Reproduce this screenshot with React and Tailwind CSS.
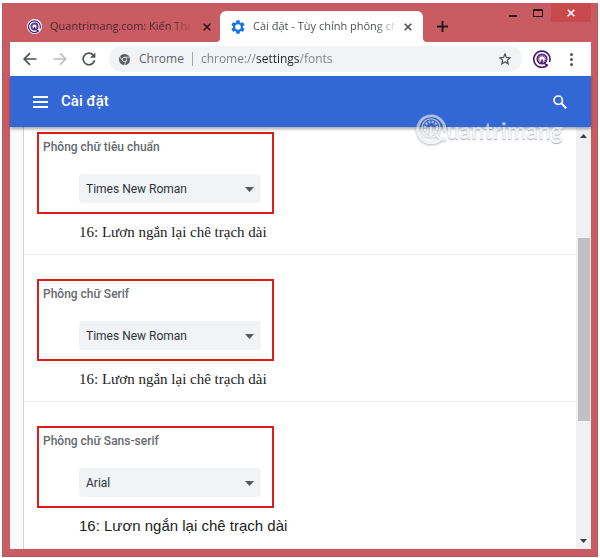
import { useState } from 'react';

const fontSections = [
  { id: 'standard', label: 'Phông chữ tiêu chuẩn', value: 'Times New Roman' },
  { id: 'serif', label: 'Phông chữ Serif', value: 'Times New Roman' },
  { id: 'sans', label: 'Phông chữ Sans-serif', value: 'Arial' },
];

const sampleText = '16: Lươn ngắn lại chê trạch dài';

function SiteLogo({ className }) {
  return (
    <svg className={className} viewBox="0 0 24 24" fill="none" stroke="currentColor">
      <path d="M19.2 20.2 A10.8 10.8 0 1 1 22 16" strokeWidth="2.2" />
      <path d="M15.4 17.6 q1.6 3 4.6 2.4" strokeWidth="2" />
      <circle cx="12" cy="12" r="5.6" strokeWidth="3.6" />
      <circle cx="12" cy="12" r="5" stroke="white" strokeOpacity="0.75" strokeWidth="1.4" strokeDasharray="1.4 1.2" />
      <path d="M10.9 12.5 h2.2 v5.5 h-2.2 Z" fill="currentColor" stroke="none" />
    </svg>
  );
}

function WatermarkLogo({ className }) {
  return (
    <svg className={className} viewBox="0 0 32 32" fill="none" stroke="currentColor">
      <path d="M26 26.5 A14 14 0 1 1 29.6 19" strokeWidth="3" />
      <circle cx="15.5" cy="15.5" r="9.4" strokeWidth="1.4" />
      <circle cx="15.5" cy="15.5" r="6.4" strokeWidth="2.6" strokeDasharray="2 1.35" />
      <path d="M15.5 14 V24 M21.5 22.5 q3.5 6 9 4.5" strokeWidth="2.4" />
    </svg>
  );
}

function CloseIcon({ className }) {
  return (
    <svg className={className} viewBox="0 0 8 8" fill="none" stroke="currentColor" strokeWidth="1.6">
      <path d="M0.7 0.7 L7.3 7.3 M7.3 0.7 L0.7 7.3" />
    </svg>
  );
}

function GearIcon() {
  return (
    <svg className="size-[14px] shrink-0 text-[#1a73e8]" viewBox="1.5 1.5 21 21" fill="currentColor">
      <path d="M19.43 12.98c.04-.32.07-.64.07-.98s-.03-.66-.07-.98l2.11-1.65c.19-.15.24-.42.12-.64l-2-3.46c-.12-.22-.39-.3-.61-.22l-2.49 1c-.52-.4-1.08-.73-1.69-.98l-.38-2.65A.49.49 0 0 0 14 2h-4c-.25 0-.46.18-.49.42l-.38 2.65c-.61.25-1.17.59-1.69.98l-2.49-1c-.23-.09-.49 0-.61.22l-2 3.46c-.13.22-.07.49.12.64l2.11 1.65c-.04.32-.07.65-.07.98s.03.66.07.98l-2.11 1.65c-.19.15-.24.42-.12.64l2 3.46c.12.22.39.3.61.22l2.49-1c.52.4 1.08.73 1.69.98l.38 2.65c.03.24.24.42.49.42h4c.25 0 .46-.18.49-.42l.38-2.65c.61-.25 1.17-.59 1.69-.98l2.49 1c.23.09.49 0 .61-.22l2-3.46c.12-.22.07-.49-.12-.64l-2.11-1.65zM12 16.2a4.2 4.2 0 1 1 0-8.4 4.2 4.2 0 0 1 0 8.4z" />
    </svg>
  );
}

function TitleBar() {
  return (
    <div className="flex h-[39px] items-start">
      <div className="mt-2 flex h-[31px] w-[210px] shrink-0 items-center pl-[17px] pr-1">
        <span className="mr-2 rounded-full bg-white p-px text-[#4b1a78]">
          <SiteLogo className="size-[13px]" />
        </span>
        <span className="w-[141px] overflow-hidden whitespace-nowrap bg-[linear-gradient(to_right,#45282b_120px,transparent_143px)] bg-clip-text text-[11px] text-transparent">
          Quantrimang.com: Kiến Thức
        </span>
        <button aria-label="Đóng thẻ" className="ml-3 text-[#2b1717]">
          <CloseIcon className="size-2" />
        </button>
      </div>

      <div className="relative mt-2 flex h-[31px] w-[203px] shrink-0 items-center rounded-t-md bg-white pl-[11px]">
        <svg className="absolute bottom-0 -left-1 size-1 text-white" viewBox="0 0 4 4" fill="currentColor">
          <path d="M4 0 V4 H0 A4 4 0 0 0 4 0 Z" />
        </svg>
        <svg className="absolute bottom-0 -right-1 size-1 text-white" viewBox="0 0 4 4" fill="currentColor">
          <path d="M0 0 V4 H4 A4 4 0 0 1 0 0 Z" />
        </svg>
        <GearIcon />
        <span className="ml-2 w-[143px] overflow-hidden whitespace-nowrap bg-[linear-gradient(to_right,#45484c_122px,transparent_145px)] bg-clip-text text-[11px] text-transparent">
          Cài đặt - Tùy chỉnh phông chữ
        </span>
        <button aria-label="Đóng thẻ" className="ml-2 text-[#4a4d51]">
          <CloseIcon className="size-2" />
        </button>
      </div>

      <button aria-label="Thẻ mới" className="mt-[18px] ml-[14px] text-[#26181a]">
        <svg className="size-[11px]" viewBox="0 0 11 11" stroke="currentColor" strokeWidth="2">
          <path d="M5.5 0 V11 M0 5.5 H11" />
        </svg>
      </button>

      <div className="ml-auto flex h-[19px] items-center">
        <button aria-label="Thu nhỏ" className="flex h-full w-[22px] items-end justify-center pb-[5px]">
          <span className="h-[2px] w-2 bg-[#26181a]"></span>
        </button>
        <button aria-label="Phóng to" className="flex h-full w-[27px] items-center justify-center">
          <span className="h-2 w-[10px] border border-t-2 border-[#26181a]"></span>
        </button>
        <button aria-label="Đóng" className="flex h-full w-10 items-center justify-center bg-[#c94a4d] text-white">
          <CloseIcon className="size-2" />
        </button>
      </div>
    </div>
  );
}

function Toolbar() {
  return (
    <div className="flex h-[34px] items-center bg-white pl-[13px] text-[#4f5357]">
      <button aria-label="Quay lại">
        <svg className="size-[14px]" viewBox="0 0 14 14" fill="none" stroke="currentColor" strokeWidth="1.7">
          <path d="M13.5 7 H1.5 M7 1.2 L1.2 7 L7 12.8" />
        </svg>
      </button>
      <button aria-label="Tiến" className="ml-4 text-[#b9bbbe]">
        <svg className="size-[14px]" viewBox="0 0 14 14" fill="none" stroke="currentColor" strokeWidth="1.6">
          <path d="M0.5 7 H12.5 M7 1.2 L12.8 7 L7 12.8" />
        </svg>
      </button>
      <button aria-label="Tải lại" className="ml-[15px]">
        <svg className="size-[14px]" viewBox="0 0 14 14" fill="none" stroke="currentColor" strokeWidth="1.7">
          <path d="M12.6 8.2 A5.8 5.8 0 1 1 11.3 3.1" />
          <path d="M13.4 0.4 V5.8 H8 Z" fill="currentColor" stroke="none" />
        </svg>
      </button>

      <div className="ml-[13px] flex h-[26px] min-w-0 flex-1 items-center rounded-full bg-[#f1f3f4] pr-[11px] pl-[10px]">
        <svg className="size-[11px] shrink-0" viewBox="0 0 12 12">
          <circle cx="6" cy="6" r="6" fill="#5a5e62" />
          <circle cx="6" cy="6" r="2.4" fill="#5a5e62" stroke="#f1f3f4" strokeWidth="0.9" />
          <path d="M6 3.4 H11.4 M3.7 7.3 L1 2.8 M8.3 7.3 L5.6 12" stroke="#f1f3f4" strokeWidth="0.8" />
        </svg>
        <span className="ml-[9px] text-xs text-[#5f6368]">Chrome</span>
        <span className="mx-2 h-[14px] w-px bg-[#a5a8ab]"></span>
        <input
          aria-label="Địa chỉ"
          defaultValue="chrome://settings/fonts"
          className="min-w-0 flex-1 bg-[linear-gradient(to_right,#7a7e83_55px,#202124_55px,#202124_98px,#7a7e83_98px)] bg-clip-text text-xs text-transparent outline-none"
        />
        <button aria-label="Dấu trang">
          <svg className="size-3" viewBox="0 0 24 24" fill="none" stroke="currentColor" strokeWidth="2.4">
            <path d="M12 2 L14.9 8.9 L22.4 9.5 L16.7 14.4 L18.4 21.7 L12 17.8 L5.6 21.7 L7.3 14.4 L1.6 9.5 L9.1 8.9 Z" />
          </svg>
        </button>
      </div>

      <button aria-label="Quantrimang" className="ml-[11px] text-[#4b1a78]">
        <SiteLogo className="size-[18px]" />
      </button>
      <button aria-label="Menu" className="mr-[18px] ml-[19px] flex flex-col gap-[2px]">
        <span className="size-[3px] rounded-full bg-[#4f5357]"></span>
        <span className="size-[3px] rounded-full bg-[#4f5357]"></span>
        <span className="size-[3px] rounded-full bg-[#4f5357]"></span>
      </button>
    </div>
  );
}

function SettingsHeader() {
  return (
    <header className="relative z-10 flex h-[51px] items-center bg-[#3367d6] pr-6 pl-[23px] text-white shadow-[0_2px_3px_rgba(0,0,0,0.35)]">
      <button aria-label="Menu chính" className="flex w-[15px] flex-col gap-[3px]">
        <span className="h-[2px] bg-white"></span>
        <span className="h-[2px] bg-white"></span>
        <span className="h-[2px] bg-white"></span>
      </button>
      <h1 className="ml-[13px] font-[Roboto,sans-serif] text-[15px] font-medium">Cài đặt</h1>
      <button aria-label="Tìm kiếm" className="ml-auto">
        <svg className="size-[14px]" viewBox="0 0 14 14" fill="none" stroke="currentColor" strokeWidth="1.7">
          <circle cx="5.2" cy="5.2" r="4.2" />
          <path d="M8.3 8.3 L13.2 13.2" strokeWidth="2" />
        </svg>
      </button>

      <div className="absolute top-[36px] right-[28px] flex items-center text-[#e9edf4] opacity-65">
        <WatermarkLogo className="size-[31px] drop-shadow-[0_1px_1px_rgba(90,90,100,0.7)]" />
        <span className="pt-1 font-[Lato,sans-serif] text-[23px] leading-7 font-bold [text-shadow:0_1px_1px_rgba(90,90,100,0.7)]">
          uantrimang
        </span>
      </div>
    </header>
  );
}

function FontSection({ section, value, onChange }) {
  return (
    <section className="border-b border-[#ececec] pt-6 pl-[13px] first:pt-[5px] last:border-b-0">
      <div className="h-[82px] w-[237px] border-2 border-[#e01b1b] pt-1 pl-1 font-[Roboto,sans-serif] text-xs">
        <label htmlFor={section.id} className="block leading-[18px] font-medium text-[#66696d]">
          {section.label}
        </label>
        <div className="relative mt-[18px] ml-9 h-[29px] w-[182px]">
          <select
            id={section.id}
            value={value}
            onChange={(e) => onChange(section.id, e.target.value)}
            className="h-full w-full appearance-none rounded-sm bg-[#f1f3f4] pl-[7px] text-[#2f3236]"
          >
            <option>Times New Roman</option>
            <option>Arial</option>
          </select>
          <svg className="pointer-events-none absolute top-[13px] right-[7px] h-[5px] w-[9px] text-[#55595d]" viewBox="0 0 9 5" fill="currentColor">
            <path d="M0 0 H9 L4.5 5 Z" />
          </svg>
        </div>
      </div>
      <p
        className={`flex h-10 items-center pb-1 pl-[42px] text-[#222] ${
          value === 'Arial'
            ? 'font-["Liberation_Sans",Arial,sans-serif] text-[15px]'
            : 'font-["Liberation_Serif","Times_New_Roman",serif] text-[15px]'
        }`}
      >
        {sampleText}
      </p>
    </section>
  );
}

function Scrollbar() {
  return (
    <div className="flex w-[15px] shrink-0 flex-col items-center bg-[#f1f1f1] pt-[7px] pb-[6px] text-[#3c3c3c]">
      <svg className="h-1 w-[7px]" viewBox="0 0 7 4" fill="currentColor">
        <path d="M0 4 L3.5 0 L7 4 Z" />
      </svg>
      <div className="mt-[100px] h-[183px] w-3 bg-[#c1c1c1]"></div>
      <svg className="mt-auto h-1 w-[7px]" viewBox="0 0 7 4" fill="currentColor">
        <path d="M0 0 L3.5 4 L7 0 Z" />
      </svg>
    </div>
  );
}

export default function App() {
  const [fonts, setFonts] = useState(
    Object.fromEntries(fontSections.map((section) => [section.id, section.value]))
  );

  const handleChange = (id, value) => {
    setFonts((prev) => ({ ...prev, [id]: value }));
  };

  return (
    <div className='flex min-h-screen flex-col bg-white px-[2px] pt-[3px] pb-px font-["Open_Sans",sans-serif]'>
      <div className="flex flex-1 flex-col border border-t-0 border-[#b45c62] bg-[#c95c62] pr-[6px] pb-[7px] pl-[7px]">
        <TitleBar />
        <Toolbar />
        <SettingsHeader />
        <div className="flex flex-1 bg-[#fafafa]">
          <main className="ml-[13px] flex-1 border-l border-[#d4d4d4] bg-white">
            {fontSections.map((section) => (
              <FontSection
                key={section.id}
                section={section}
                value={fonts[section.id]}
                onChange={handleChange}
              />
            ))}
          </main>
          <Scrollbar />
        </div>
      </div>
    </div>
  );
}
